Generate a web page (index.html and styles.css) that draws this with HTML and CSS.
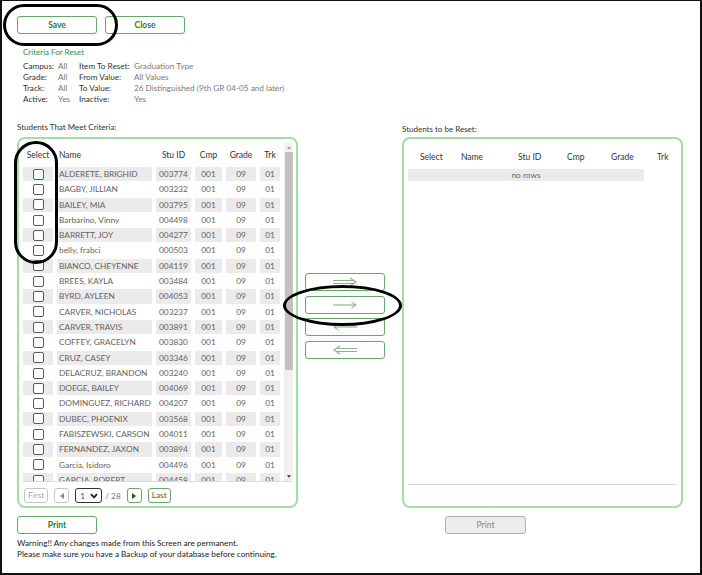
FILE: index.html
```html
<!DOCTYPE html>
<html>
<head>
<meta charset="utf-8">
<link rel="stylesheet" href="styles.css">
</head>
<body>
<div class="frame">
  <div class="toolbar">
    <button class="btn">Save</button>
    <button class="btn">Close</button>
  </div>
  <div class="criteria">
    <div class="crit-title">Criteria For Reset</div>
    <div class="crit-grid">
      <span class="lbl">Campus:</span><span class="val">All</span><span class="lbl">Item To Reset:</span><span class="val">Graduation Type</span>
      <span class="lbl">Grade:</span><span class="val">All</span><span class="lbl">From Value:</span><span class="val">All Values</span>
      <span class="lbl">Track:</span><span class="val">All</span><span class="lbl">To Value:</span><span class="val">26 Distinguished (9th GR 04-05 and later)</span>
      <span class="lbl">Active:</span><span class="val">Yes</span><span class="lbl">Inactive:</span><span class="val">Yes</span>
    </div>
  </div>

  <div class="main">
    <div class="sec-label">Students That Meet Criteria:</div>
    <div></div>
    <div class="sec-label right">Students to be Reset:</div>

    <div class="panel left-panel">
      <div class="scrollwrap">
        <div class="grid">
          <div class="row head">
            <span class="c">Select</span><span class="c name">Name</span><span class="c">Stu ID</span><span class="c">Cmp</span><span class="c">Grade</span><span class="c">Trk</span>
          </div>
          <div class="row alt"><span class="c"><i class="cb focus"></i></span><span class="c name">ALDERETE, BRIGHID</span><span class="c">003774</span><span class="c">001</span><span class="c">09</span><span class="c">01</span></div>
          <div class="row"><span class="c"><i class="cb"></i></span><span class="c name">BAGBY, JILLIAN</span><span class="c">003232</span><span class="c">001</span><span class="c">09</span><span class="c">01</span></div>
          <div class="row alt"><span class="c"><i class="cb"></i></span><span class="c name">BAILEY, MIA</span><span class="c">003795</span><span class="c">001</span><span class="c">09</span><span class="c">01</span></div>
          <div class="row"><span class="c"><i class="cb"></i></span><span class="c name">Barbarino, Vinny</span><span class="c">004498</span><span class="c">001</span><span class="c">09</span><span class="c">01</span></div>
          <div class="row alt"><span class="c"><i class="cb"></i></span><span class="c name">BARRETT, JOY</span><span class="c">004277</span><span class="c">001</span><span class="c">09</span><span class="c">01</span></div>
          <div class="row"><span class="c"><i class="cb"></i></span><span class="c name">belly, frabci</span><span class="c">000503</span><span class="c">001</span><span class="c">09</span><span class="c">01</span></div>
          <div class="row alt"><span class="c"><i class="cb"></i></span><span class="c name">BIANCO, CHEYENNE</span><span class="c">004119</span><span class="c">001</span><span class="c">09</span><span class="c">01</span></div>
          <div class="row"><span class="c"><i class="cb"></i></span><span class="c name">BREES, KAYLA</span><span class="c">003484</span><span class="c">001</span><span class="c">09</span><span class="c">01</span></div>
          <div class="row alt"><span class="c"><i class="cb"></i></span><span class="c name">BYRD, AYLEEN</span><span class="c">004053</span><span class="c">001</span><span class="c">09</span><span class="c">01</span></div>
          <div class="row"><span class="c"><i class="cb"></i></span><span class="c name">CARVER, NICHOLAS</span><span class="c">003237</span><span class="c">001</span><span class="c">09</span><span class="c">01</span></div>
          <div class="row alt"><span class="c"><i class="cb"></i></span><span class="c name">CARVER, TRAVIS</span><span class="c">003891</span><span class="c">001</span><span class="c">09</span><span class="c">01</span></div>
          <div class="row"><span class="c"><i class="cb"></i></span><span class="c name">COFFEY, GRACELYN</span><span class="c">003830</span><span class="c">001</span><span class="c">09</span><span class="c">01</span></div>
          <div class="row alt"><span class="c"><i class="cb"></i></span><span class="c name">CRUZ, CASEY</span><span class="c">003346</span><span class="c">001</span><span class="c">09</span><span class="c">01</span></div>
          <div class="row"><span class="c"><i class="cb"></i></span><span class="c name">DELACRUZ, BRANDON</span><span class="c">003240</span><span class="c">001</span><span class="c">09</span><span class="c">01</span></div>
          <div class="row alt"><span class="c"><i class="cb"></i></span><span class="c name">DOEGE, BAILEY</span><span class="c">004069</span><span class="c">001</span><span class="c">09</span><span class="c">01</span></div>
          <div class="row"><span class="c"><i class="cb"></i></span><span class="c name">DOMINGUEZ, RICHARD</span><span class="c">004207</span><span class="c">001</span><span class="c">09</span><span class="c">01</span></div>
          <div class="row alt"><span class="c"><i class="cb"></i></span><span class="c name">DUBEC, PHOENIX</span><span class="c">003568</span><span class="c">001</span><span class="c">09</span><span class="c">01</span></div>
          <div class="row"><span class="c"><i class="cb"></i></span><span class="c name">FABISZEWSKI, CARSON</span><span class="c">004011</span><span class="c">001</span><span class="c">09</span><span class="c">01</span></div>
          <div class="row alt"><span class="c"><i class="cb"></i></span><span class="c name">FERNANDEZ, JAXON</span><span class="c">003894</span><span class="c">001</span><span class="c">09</span><span class="c">01</span></div>
          <div class="row"><span class="c"><i class="cb"></i></span><span class="c name">Garcia, Isidoro</span><span class="c">004496</span><span class="c">001</span><span class="c">09</span><span class="c">01</span></div>
          <div class="row alt"><span class="c"><i class="cb"></i></span><span class="c name">GARCIA, ROBERT</span><span class="c">004458</span><span class="c">001</span><span class="c">09</span><span class="c">01</span></div>
        </div>
        <div class="vscroll">
          <div class="arr up"></div>
          <div class="thumb"></div>
          <div class="arr down"></div>
        </div>
      </div>
      <div class="hline"></div>
      <div class="pager">
        <span class="pbtn disabled">First</span>
        <span class="pbtn disabled icon"><i class="tri-l"></i></span>
        <span class="psel">1<svg width="8" height="6" viewBox="0 0 8 6"><path d="M1 1.2 L4 4.4 L7 1.2" fill="none" stroke="#222" stroke-width="1.8"/></svg></span>
        <span class="ptotal">/ 28</span>
        <span class="pbtn icon"><i class="tri-r"></i></span>
        <span class="pbtn">Last</span>
      </div>
    </div>

    <div class="mid">
      <button class="mbtn"><svg width="26" height="10" viewBox="0 0 26 10"><path d="M1 3.5 H21 M1 6.5 H21" stroke="#8ab48a" stroke-width="1.2" fill="none"/><path d="M18 1 L24 5 L18 9" stroke="#8ab48a" stroke-width="1.2" fill="none"/></svg></button>
      <button class="mbtn"><svg width="26" height="10" viewBox="0 0 26 10"><path d="M1 5 H24 M19.5 1.8 L24 5 L19.5 8.2" stroke="#7aa87a" stroke-width="1" fill="none"/></svg></button>
      <button class="mbtn"><svg width="26" height="10" viewBox="0 0 26 10"><path d="M25 5 H2 M6.5 1.8 L2 5 L6.5 8.2" stroke="#7aa87a" stroke-width="1" fill="none"/></svg></button>
      <button class="mbtn"><svg width="26" height="10" viewBox="0 0 26 10"><path d="M5 3.5 H25 M5 6.5 H25" stroke="#8ab48a" stroke-width="1.2" fill="none"/><path d="M8 1 L2 5 L8 9" stroke="#8ab48a" stroke-width="1.2" fill="none"/></svg></button>
    </div>

    <div class="panel right-panel">
      <div class="rhead">
        <span>Select</span><span>Name</span><span>Stu ID</span><span>Cmp</span><span>Grade</span><span>Trk</span>
      </div>
      <div class="norows">no rows</div>
      <div class="spacer"></div>
      <div class="hline r"></div>
    </div>

    <div class="print-cell"><button class="btn">Print</button></div>
    <div></div>
    <div class="print-cell"><button class="btn disabled print-r">Print</button></div>
  </div>

  <div class="warning">
    <div>Warning!! Any changes made from this Screen are permanent.</div>
    <div>Please make sure you have a Backup of your database before continuing.</div>
  </div>

  <div class="oval o1"></div>
  <div class="oval o2"></div>
  <div class="oval o3"></div>
</div>
</body>
</html>
```

FILE: styles.css
```css
* { box-sizing: border-box; }
html, body { margin: 0; padding: 0; background: #fff; }
body { font-family: Lato, "Open Sans", "Liberation Sans", sans-serif; font-size: 8px; color: #333; }

.frame {
  position: relative;
  width: 702px;
  height: 575px;
  border-style: solid;
  border-color: #111;
  border-width: 1px 2px 2px 2px;
  padding: 15px 0 0 15px;
  overflow: hidden;
}

.toolbar { display: flex; gap: 8px; }

.btn {
  width: 80px;
  height: 18px;
  border: 1px solid #6aa66a;
  border-radius: 3px;
  background: #fff;
  color: #2f7a2f;
  font-family: inherit;
  font-size: 8.5px;
  font-weight: 700;
  padding: 0;
  line-height: 16px;
}
.btn.disabled {
  background: #ececec;
  border-color: #b4b4b4;
  color: #8a8a8a;
  font-weight: 400;
}

.criteria { margin: 13px 0 0 6px; }
.crit-title { color: #3a8a3a; font-size: 8px; line-height: 11px; }
.crit-grid {
  margin-top: 2.5px;
  display: grid;
  grid-template-columns: 35px 21px 55px auto;
  line-height: 11px;
  font-size: 8.2px;
}
.crit-grid .lbl { color: #333; }
.crit-grid .val { color: #7a7a7a; }

.main {
  margin-top: 17px;
  display: grid;
  grid-template-columns: 281px 104px 281px;
  grid-template-rows: 15.5px 371px auto;
}
.sec-label { line-height: 11px; font-size: 8px; color: #333; }
.sec-label.right { padding-top: 2px; }

.panel {
  border: 2px solid #a6dca6;
  border-radius: 8px;
  display: flex;
  flex-direction: column;
  height: 371px;
}

.scrollwrap {
  margin-top: 4px;
  height: 338px;
  display: flex;
  padding-left: 4px;
  padding-right: 3px;
}
.grid { flex: 1; overflow: hidden; }
.row {
  display: grid;
  grid-template-columns: 30px 95px 35px 27px 30px 20px;
  column-gap: 4px;
  height: 13.3px;
  margin-bottom: 2px;
  line-height: 13.3px;
  font-size: 8.3px;
  color: #636363;
}
.row .c { text-align: center; white-space: nowrap; display: flex; align-items: center; justify-content: center; padding-top: 1px; }
.row .c.name { justify-content: flex-start; padding-left: 2px; }
.row.alt .c { background: #ebebeb; }
.row.head { margin: 5px 0 5px 0; height: 14px; color: #333; font-size: 8.5px; }
.row.head .c { background: none; }

.cb {
  display: block;
  width: 11px;
  height: 11px;
  margin-top: -1px;
  border: 1px solid #5a5a5a;
  border-radius: 2px;
  background: #fff;
}
.cb.focus { border-color: #2f7a2f; }

.vscroll {
  width: 9px;
  margin-left: 4px;
  background: #f1f1f1;
  display: flex;
  flex-direction: column;
  align-items: center;
}
.arr { width: 0; height: 0; border-left: 2.5px solid transparent; border-right: 2.5px solid transparent; }
.arr.up { border-bottom: 3px solid #a3a3a3; margin-top: 3px; }
.arr.down { border-top: 3px solid #505050; margin-top: auto; margin-bottom: 3px; }
.thumb { width: 8px; height: 218px; background: #c1c1c1; margin-top: 3px; }

.hline { height: 1px; background: #d3dbe3; margin: 0 4px; }

.pager {
  display: flex;
  align-items: center;
  gap: 6px;
  margin: 6px 0 0 5px;
  height: 15px;
}
.pbtn {
  height: 15px;
  padding: 0 3px;
  border: 1px solid #6aa66a;
  border-radius: 3px;
  color: #2f6a2f;
  font-size: 8.3px;
  line-height: 13px;
  display: flex;
  align-items: center;
  justify-content: center;
}
.pbtn.disabled { border-color: #c6c6c6; color: #a8a8a8; }
.pbtn.icon { width: 15px; padding: 0; }
.tri-l { width: 0; height: 0; border-top: 3.5px solid transparent; border-bottom: 3.5px solid transparent; border-right: 4px solid #8a8a8a; }
.tri-r { width: 0; height: 0; border-top: 3.5px solid transparent; border-bottom: 3.5px solid transparent; border-left: 4px solid #1f5a1f; }
.psel {
  width: 27px;
  height: 15px;
  border: 1px solid #333;
  border-radius: 3px;
  font-size: 8.3px;
  color: #555;
  padding-left: 4px;
  padding-right: 3px;
  display: flex;
  align-items: center;
  justify-content: space-between;
}
.ptotal { color: #777; font-size: 8.3px; margin-left: -3px; }

.mid {
  padding: 136px 0 0 7px;
  display: flex;
  flex-direction: column;
  gap: 4.5px;
}
.mbtn {
  width: 80px;
  height: 18px;
  border: 1px solid #6aa66a;
  border-radius: 3px;
  background: #fff;
  padding: 0;
  display: flex;
  align-items: center;
  justify-content: center;
}

.rhead {
  margin: 11px 0 0 16px;
  height: 14px;
  display: grid;
  grid-template-columns: 41px 57px 49px 44px 46px auto;
  line-height: 14px;
  font-size: 8.5px;
  color: #333;
}
.norows {
  margin: 5px 0 0 4px;
  width: 236px;
  height: 12px;
  background: #ebebeb;
  text-align: center;
  line-height: 12px;
  font-size: 8.3px;
  color: #666;
}
.spacer { flex: 1; }
.hline.r { margin-bottom: 21px; }

.print-cell { padding-top: 8px; }
.print-r { margin-left: 43px; width: 81px; }

.warning { margin-top: 3.5px; line-height: 11px; font-size: 8.2px; color: #222; }

.oval {
  position: absolute;
  border: 3px solid #000;
}
.o1 { left: 1px; top: 3px; width: 115px; height: 42px; border-radius: 22px; }
.o2 { left: 12px; top: 140px; width: 44px; height: 123px; border-radius: 22px; }
.o3 { left: 281px; top: 284px; width: 119px; height: 41px; border-radius: 50%; }
```
